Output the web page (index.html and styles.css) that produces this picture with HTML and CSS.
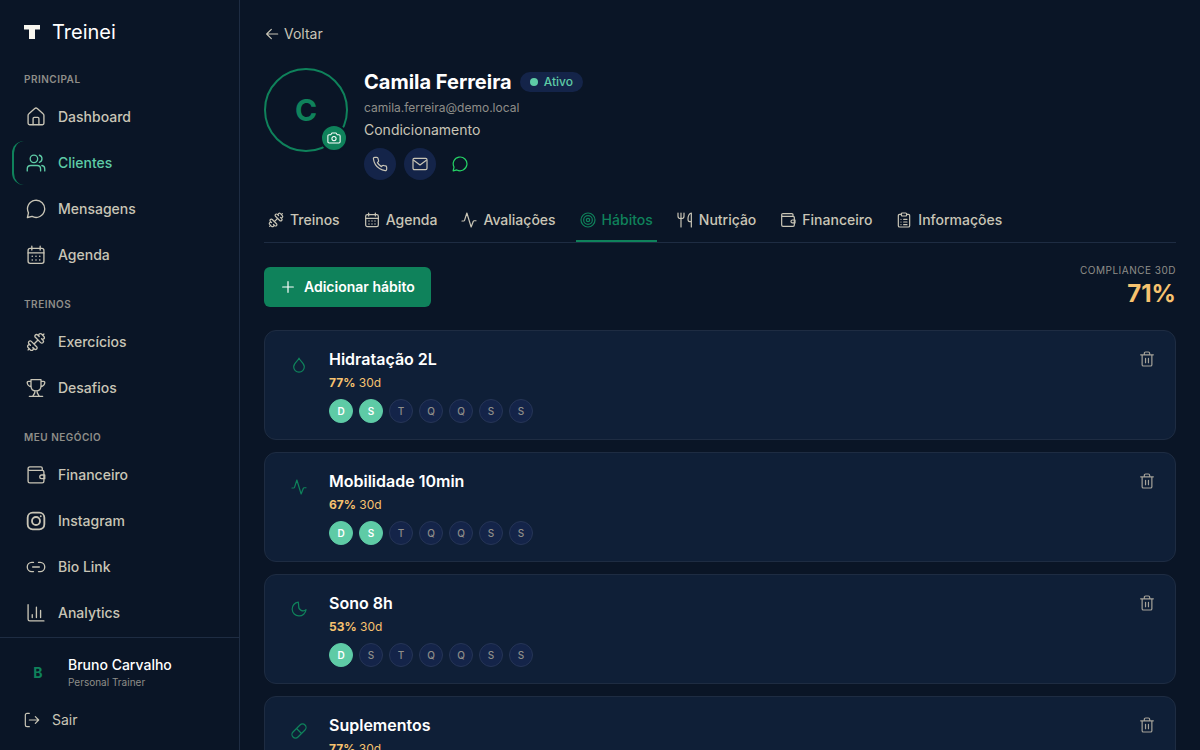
FILE: index.html
```
<!DOCTYPE html>
<html lang="pt-BR">
<head>
    <meta charset="UTF-8">
    <meta name="viewport" content="width=device-width, initial-scale=1.0">
    <title>Camila Ferreira - Treinei</title>
    <link rel="stylesheet" href="styles.css">
</head>
<body>
    <!-- Ícones -->
    <svg class="sprite" aria-hidden="true">
        <symbol id="i-home" viewBox="0 0 24 24"><path d="M2.5 10.2c0-.9.4-1.600 1-2.100l7-6.200c.9-.8 2.100-.8 3 0l7 6.200c.6.5 1 1.200 1 2.100v9.300c0 1.100-.7 1.800-1.800 1.800H4.300c-1.100 0-1.800-.7-1.800-1.800z"/><path d="M8.500 21v-7.200c0-.8.5-1.300 1.300-1.300h4.400c.8 0 1.300.5 1.300 1.300V21"/></symbol>
        <symbol id="i-users" viewBox="0 0 24 24"><circle cx="9.500" cy="7" r="4.500"/><path d="M1.500 21.500v-2.300c0-2.600 1.700-4.200 4.200-4.200h7.600c2.500 0 4.200 1.600 4.200 4.200v2.300M16 2.700a4.500 4.500 0 0 1 0 8.600M19 15c2.200.3 3.500 1.900 3.500 4.200v2.300"/></symbol>
        <symbol id="i-chat" viewBox="0 0 24 24"><path d="M1.700 22.200l1.300-5.600A10.300 10.300 0 1 1 7.300 20.900z"/></symbol>
        <symbol id="i-calendar" viewBox="0 0 24 24"><rect x="2.500" y="4" width="19" height="18" rx="2.500"/><path d="M2.500 9.500h19M7 1.500V6M17 1.500V6"/><path class="dots" d="M7.500 13.500h.01M12 13.500h.01M16.500 13.500h.01M7.500 18h.01M12 18h.01M16.500 18h.01"/></symbol>
        <symbol id="i-dumbbell" viewBox="0 0 24 24"><path d="M14.400 14.400 9.600 9.600M18.657 21.485a2 2 0 1 1-2.829-2.828l-1.767 1.768a2 2 0 1 1-2.829-2.829l6.364-6.364a2 2 0 1 1 2.829 2.829l-1.768 1.767a2 2 0 1 1 2.828 2.829zM21.500 21.500l-1.400-1.400M3.900 3.900 2.500 2.500M6.404 12.768a2 2 0 1 1-2.829-2.829l1.768-1.767a2 2 0 1 1-2.828-2.829l2.828-2.828a2 2 0 1 1 2.829 2.828l1.767-1.768a2 2 0 1 1 2.829 2.829z" transform="matrix(-1 0 0 1 24 0)"/></symbol>
        <symbol id="i-trophy" viewBox="0 0 24 24"><path d="M6 2h12v7.500c0 3.600-2.500 6-6 6s-6-2.400-6-6zM6 4H3.200C2 4 1.300 4.800 1.500 6c.3 2.400 2 4 4.700 4.500M18 4h2.800c1.200 0 1.900.8 1.700 2-.3 2.400-2 4-4.700 4.500M10.500 15.500v2.300L8 22M13.500 15.500v2.300L16 22M4 22h16"/></symbol>
        <symbol id="i-wallet" viewBox="0 0 24 24"><path d="M19.500 6.500V4c0-1-.7-1.700-1.700-1.700H4.500a2 2 0 0 0-2 2.200v15c0 1.200.8 2 2 2h15c1.200 0 2-.8 2-2V8.500c0-1.200-.8-2-2-2h-15a2 2 0 0 1-2-2.100"/><path d="M22.500 12h-3.800a2.200 2.200 0 0 0 0 4.400h3.800z"/></symbol>
        <symbol id="i-instagram" viewBox="0 0 24 24"><g stroke-width="2.200"><rect x="2" y="2" width="20" height="20" rx="6"/><circle cx="12" cy="12" r="4.800"/><path d="M17.700 6.300h.01"/></g></symbol>
        <symbol id="i-link" viewBox="0 0 24 24"><path d="M9 6.500H7a5.500 5.500 0 0 0 0 11h2M15 6.500h2a5.500 5.500 0 0 1 0 11h-2M8 12h8"/></symbol>
        <symbol id="i-chart" viewBox="0 0 24 24"><path d="M2.500 2v17.500c0 1.200.8 2 2 2H21.500M7.500 14v3.500M12.500 5v12.500M17.500 9v8.500"/></symbol>
        <symbol id="i-logout" viewBox="0 0 24 24"><path d="M8 2H4.500C3.100 2 2 3.100 2 4.500v15C2 20.900 3.100 22 4.500 22H8M8 12h14M17 7l5 5-5 5"/></symbol>
        <symbol id="i-back" viewBox="0 0 24 24"><path d="M20.500 12H4M11 5l-7 7 7 7"/></symbol>
        <symbol id="i-camera" viewBox="0 0 24 24"><path d="M8.500 3.500h7l2 3h3c1.200 0 2 .8 2 2v10c0 1.200-.8 2-2 2h-17c-1.200 0-2-.8-2-2v-10c0-1.200.8-2 2-2h3z"/><circle cx="12" cy="13" r="3.600"/></symbol>
        <symbol id="i-phone" viewBox="0 0 24 24"><path d="M22 16.920v3a2 2 0 0 1-2.180 2 19.790 19.790 0 0 1-8.630-3.070 19.500 19.500 0 0 1-6-6 19.790 19.790 0 0 1-3.070-8.670A2 2 0 0 1 4.110 2h3a2 2 0 0 1 2 1.720c.13.960.36 1.900.7 2.810a2 2 0 0 1-.45 2.110L8.090 9.910a16 16 0 0 0 6 6l1.270-1.270a2 2 0 0 1 2.110-.45c.91.340 1.850.570 2.810.7A2 2 0 0 1 22 16.920z"/></symbol>
        <symbol id="i-mail" viewBox="0 0 24 24"><rect x="1.500" y="3.500" width="21" height="17" rx="2"/><path d="M2.500 6.500 12 13.500l9.500-7"/></symbol>
        <symbol id="i-activity" viewBox="0 0 24 24"><path d="M1.500 13.500h2.400c.7 0 1.200-.4 1.400-1L8.800 1.500l6.400 21 3.300-8.500c.2-.6.7-.9 1.300-.9h2.700"/></symbol>
        <symbol id="i-target" viewBox="0 0 24 24"><circle cx="12" cy="12" r="10.500"/><circle cx="12" cy="12" r="6.500"/><circle cx="12" cy="12" r="2.500"/></symbol>
        <symbol id="i-food" viewBox="0 0 24 24"><path d="M6 1.500v21M1.500 1.500v4.800C1.500 8.700 3.300 10 6 10s4.500-1.300 4.500-3.700V1.500M21.500 22.500v-21c-3 .8-5 4.300-5 9.500 0 2.200.9 3.500 2.500 3.500h2.500"/></symbol>
        <symbol id="i-clipboard" viewBox="0 0 24 24"><path d="M8 3.500H5.500c-1.200 0-2 .8-2 2V20.500c0 1.200.8 2 2 2h13c1.200 0 2-.8 2-2V5.500c0-1.200-.8-2-2-2H16"/><rect x="8" y="1.500" width="8" height="4.500" rx="1.500"/><path d="M7.500 11h.01M7.500 15h.01M7.500 19h.01M11.500 11h5M11.500 15h5M11.500 19h5"/></symbol>
        <symbol id="i-plus" viewBox="0 0 24 24"><path d="M12 4v16M4 12h16"/></symbol>
        <symbol id="i-drop" viewBox="0 0 24 24"><path d="M12 1.500c0 3.300-8 7.400-8 13.200a8 8 0 0 0 16 0C20 8.900 12 4.800 12 1.500z"/></symbol>
        <symbol id="i-moon" viewBox="0 0 24 24"><path d="M11 1.700A10.400 10.400 0 1 0 22.500 13 6.600 6.600 0 0 1 11.500 7.500c0-2.200-.6-4.200-.5-5.800z"/></symbol>
        <symbol id="i-pill" viewBox="0 0 24 24"><path d="m10.500 21 10.500-10.500a5.300 5.300 0 0 0-7.500-7.500L3 13.500a5.300 5.300 0 0 0 7.500 7.500zM8.300 8.300l7.500 7.500"/></symbol>
        <symbol id="i-trash" viewBox="0 0 24 24"><path d="M2.500 5.800h19M4.700 5.800v14.700c0 1.200.8 2 2 2h10.600c1.200 0 2-.8 2-2V5.800M8 5.500V3.500c0-1.200.8-2 2-2h4c1.200 0 2 .8 2 2v2M9.800 11v6.500M14.200 11v6.500"/></symbol>
    </svg>

    <div class="app">
        <aside class="sidebar">
            <a class="brand" href="#">
                <svg class="brand-mark" viewBox="0 0 16 14" aria-hidden="true"><path d="M0 0h16v4.500h-5V14H5V4.500H0z"/></svg>
                <span>Treinei</span>
            </a>

            <nav class="nav">
                <h2 class="nav-label">Principal</h2>
                <a class="nav-item" href="#"><svg class="icon"><use href="#i-home"/></svg>Dashboard</a>
                <a class="nav-item active" href="#"><svg class="icon"><use href="#i-users"/></svg>Clientes</a>
                <a class="nav-item" href="#"><svg class="icon"><use href="#i-chat"/></svg>Mensagens</a>
                <a class="nav-item" href="#"><svg class="icon"><use href="#i-calendar"/></svg>Agenda</a>

                <h2 class="nav-label">Treinos</h2>
                <a class="nav-item" href="#"><svg class="icon"><use href="#i-dumbbell"/></svg>Exercícios</a>
                <a class="nav-item" href="#"><svg class="icon"><use href="#i-trophy"/></svg>Desafios</a>

                <h2 class="nav-label">Meu negócio</h2>
                <a class="nav-item" href="#"><svg class="icon"><use href="#i-wallet"/></svg>Financeiro</a>
                <a class="nav-item" href="#"><svg class="icon"><use href="#i-instagram"/></svg>Instagram</a>
                <a class="nav-item" href="#"><svg class="icon"><use href="#i-link"/></svg>Bio Link</a>
                <a class="nav-item" href="#"><svg class="icon"><use href="#i-chart"/></svg>Analytics</a>
            </nav>

            <div class="sidebar-footer">
                <div class="user">
                    <span class="user-avatar">B</span>
                    <div>
                        <div class="user-name">Bruno Carvalho</div>
                        <div class="user-role">Personal Trainer</div>
                    </div>
                </div>
                <button class="logout" type="button"><svg class="icon"><use href="#i-logout"/></svg>Sair</button>
            </div>
        </aside>

        <main class="content">
            <a class="back" href="#"><svg class="icon"><use href="#i-back"/></svg>Voltar</a>

            <header class="profile">
                <div class="avatar">
                    C
                    <button class="avatar-edit" type="button" aria-label="Alterar foto"><svg class="icon"><use href="#i-camera"/></svg></button>
                </div>
                <div>
                    <div class="profile-title">
                        <h1>Camila Ferreira</h1>
                        <span class="status">Ativo</span>
                    </div>
                    <p class="email">camila.ferreira@demo.local</p>
                    <p class="goal">Condicionamento</p>
                    <div class="contacts">
                        <a class="contact" href="#" aria-label="Telefone"><svg class="icon"><use href="#i-phone"/></svg></a>
                        <a class="contact" href="#" aria-label="E-mail"><svg class="icon"><use href="#i-mail"/></svg></a>
                        <a class="contact whatsapp" href="#" aria-label="WhatsApp"><svg class="icon"><use href="#i-chat"/></svg></a>
                    </div>
                </div>
            </header>

            <nav class="tabs">
                <a class="tab" href="#"><svg class="icon"><use href="#i-dumbbell"/></svg>Treinos</a>
                <a class="tab" href="#"><svg class="icon"><use href="#i-calendar"/></svg>Agenda</a>
                <a class="tab" href="#"><svg class="icon"><use href="#i-activity"/></svg>Avaliações</a>
                <a class="tab active" href="#"><svg class="icon"><use href="#i-target"/></svg>Hábitos</a>
                <a class="tab" href="#"><svg class="icon"><use href="#i-food"/></svg>Nutrição</a>
                <a class="tab" href="#"><svg class="icon"><use href="#i-wallet"/></svg>Financeiro</a>
                <a class="tab" href="#"><svg class="icon"><use href="#i-clipboard"/></svg>Informações</a>
            </nav>

            <div class="toolbar">
                <button class="btn-add" type="button"><svg class="icon"><use href="#i-plus"/></svg>Adicionar hábito</button>
                <div class="compliance">
                    <div class="compliance-label">Compliance 30d</div>
                    <div class="compliance-value">71%</div>
                </div>
            </div>

            <section class="habits">
                <article class="habit">
                    <div class="habit-icon"><svg class="icon"><use href="#i-drop"/></svg></div>
                    <div class="habit-body">
                        <h3>Hidratação 2L</h3>
                        <p class="rate"><strong>77%</strong> 30d</p>
                        <div class="days">
                            <span class="day done">D</span><span class="day done">S</span><span class="day">T</span><span class="day">Q</span><span class="day">Q</span><span class="day">S</span><span class="day">S</span>
                        </div>
                    </div>
                    <button class="remove" type="button" aria-label="Remover Hidratação 2L"><svg class="icon"><use href="#i-trash"/></svg></button>
                </article>
                <article class="habit">
                    <div class="habit-icon"><svg class="icon"><use href="#i-activity"/></svg></div>
                    <div class="habit-body">
                        <h3>Mobilidade 10min</h3>
                        <p class="rate"><strong>67%</strong> 30d</p>
                        <div class="days">
                            <span class="day done">D</span><span class="day done">S</span><span class="day">T</span><span class="day">Q</span><span class="day">Q</span><span class="day">S</span><span class="day">S</span>
                        </div>
                    </div>
                    <button class="remove" type="button" aria-label="Remover Mobilidade 10min"><svg class="icon"><use href="#i-trash"/></svg></button>
                </article>
                <article class="habit">
                    <div class="habit-icon"><svg class="icon"><use href="#i-moon"/></svg></div>
                    <div class="habit-body">
                        <h3>Sono 8h</h3>
                        <p class="rate"><strong>53%</strong> 30d</p>
                        <div class="days">
                            <span class="day done">D</span><span class="day">S</span><span class="day">T</span><span class="day">Q</span><span class="day">Q</span><span class="day">S</span><span class="day">S</span>
                        </div>
                    </div>
                    <button class="remove" type="button" aria-label="Remover Sono 8h"><svg class="icon"><use href="#i-trash"/></svg></button>
                </article>
                <article class="habit">
                    <div class="habit-icon"><svg class="icon"><use href="#i-pill"/></svg></div>
                    <div class="habit-body">
                        <h3>Suplementos</h3>
                        <p class="rate"><strong>77%</strong> 30d</p>
                    </div>
                    <button class="remove" type="button" aria-label="Remover Suplementos"><svg class="icon"><use href="#i-trash"/></svg></button>
                </article>
            </section>
        </main>
    </div>
</body>
</html>
```
FILE: styles.css
```
:root {
    --bg: #0a1526;
    --card: #0f1f37;
    --pill: #142449;
    --line: #1e2c42;
    --text: #c9c5b6;
    --muted: #8f8e89;
    --green: #0f825b;
    --mint: #5ecba6;
    --amber: #f7c26f;
}
* {
    box-sizing: border-box;
}
body {
    margin: 0;
    background-color: var(--bg);
    color: var(--text);
    font-family: Inter, sans-serif;
    font-size: 14px;
    line-height: 20px;
}
h1, h2, h3, p {
    margin: 0;
}
a {
    color: inherit;
    text-decoration: none;
}
button {
    font: inherit;
    color: inherit;
    background: none;
    border: 0;
    padding: 0;
    cursor: pointer;
}
.sprite {
    display: none;
}
.icon {
    width: 16px;
    height: 16px;
    flex-shrink: 0;
    fill: none;
    stroke: currentColor;
    stroke-width: 1.8;
    stroke-linecap: round;
    stroke-linejoin: round;
}
.dots {
    stroke-width: 2;
}
.app {
    display: flex;
    height: 100vh;
    overflow: hidden;
}

/* Menu lateral */
.sidebar {
    display: flex;
    flex-direction: column;
    width: 240px;
    flex-shrink: 0;
    border-right: 1px solid var(--line);
}
.brand {
    display: flex;
    align-items: center;
    gap: 12px;
    padding: 18px 24px 14px;
    color: #fff;
    font-size: 20px;
    font-weight: 400;
    line-height: 28px;
}
.brand-mark {
    width: 16px;
    height: 14px;
    fill: #f8f6ef;
}
.nav {
    flex: 1;
    min-height: 0;
    overflow: hidden;
    display: flex;
    flex-direction: column;
    gap: 2px;
    padding: 0 12px;
}
.nav-label {
    margin: 17px 12px 6px;
    color: var(--muted);
    font-size: 10px;
    font-weight: 600;
    line-height: 16px;
    letter-spacing: 0.05em;
    text-transform: uppercase;
}
.nav-label:first-child {
    margin-top: 11px;
}
.nav-item {
    display: flex;
    align-items: center;
    gap: 12px;
    height: 44px;
    flex-shrink: 0;
    padding: 0 12px;
    border-left: 2px solid transparent;
    border-radius: 12px;
    font-weight: 500;
}
.nav-item .icon {
    width: 20px;
    height: 20px;
    stroke-width: 1.6;
}
.nav-item.active {
    border-left-color: var(--green);
    color: var(--mint);
}
.sidebar-footer {
    border-top: 1px solid var(--line);
    padding: 17px 24px 20px;
}
.user {
    display: flex;
    align-items: center;
    gap: 16px;
}
.user-avatar {
    width: 28px;
    color: var(--green);
    font-weight: 700;
    text-align: center;
}
.user-name {
    color: #fff;
    font-weight: 500;
}
.user-role {
    color: var(--muted);
    font-size: 10px;
    line-height: 15px;
}
.logout {
    display: flex;
    align-items: center;
    gap: 12px;
    margin-top: 20px;
}

/* Conteúdo */
.content {
    flex: 1;
    min-width: 0;
    padding: 24px;
    overflow-y: auto;
    scrollbar-width: none;
}
.back {
    display: flex;
    align-items: center;
    gap: 4px;
}
.profile {
    display: flex;
    gap: 16px;
    margin-top: 24px;
}
.avatar {
    position: relative;
    display: flex;
    align-items: center;
    justify-content: center;
    width: 84px;
    height: 84px;
    border: 2px solid var(--green);
    border-radius: 50%;
    color: var(--green);
    font-size: 30px;
    font-weight: 700;
}
.avatar-edit {
    position: absolute;
    right: -2px;
    bottom: -2px;
    display: flex;
    align-items: center;
    justify-content: center;
    width: 28px;
    height: 28px;
    border: 2px solid var(--bg);
    border-radius: 50%;
    background-color: var(--green);
    color: #fff;
}
.avatar-edit .icon {
    width: 14px;
    height: 14px;
}
.profile-title {
    display: flex;
    align-items: center;
    gap: 8px;
}
.profile-title h1 {
    color: #fff;
    font-size: 20px;
    font-weight: 700;
    line-height: 28px;
}
.status {
    display: flex;
    align-items: center;
    gap: 6px;
    padding: 0 10px;
    border-radius: 10px;
    background-color: var(--pill);
    color: var(--mint);
    font-size: 12px;
    font-weight: 500;
    line-height: 20px;
}
.status::before {
    content: "";
    width: 8px;
    height: 8px;
    border-radius: 50%;
    background-color: var(--mint);
}
.email {
    margin-top: 2px;
    color: var(--muted);
    font-size: 12px;
}
.goal {
    margin-top: 2px;
}
.contacts {
    display: flex;
    gap: 8px;
    margin-top: 8px;
}
.contact {
    display: flex;
    align-items: center;
    justify-content: center;
    width: 32px;
    height: 32px;
    border-radius: 50%;
    background-color: var(--pill);
}
.contact.whatsapp {
    background-color: transparent;
    color: #25d366;
}
.tabs {
    display: flex;
    gap: 16px;
    margin-top: 18px;
    border-bottom: 1px solid var(--line);
}
.tab {
    display: flex;
    align-items: center;
    gap: 6px;
    padding: 12px 4px 10px;
    border-bottom: 2px solid transparent;
    font-weight: 500;
}
.tab.active {
    border-bottom-color: var(--green);
    color: var(--green);
}
.toolbar {
    display: flex;
    align-items: center;
    justify-content: space-between;
    margin-top: 20px;
}
.btn-add {
    display: flex;
    align-items: center;
    gap: 8px;
    height: 40px;
    padding: 0 16px;
    border-radius: 6px;
    background-color: var(--green);
    color: #fff;
    font-weight: 600;
}
.compliance {
    text-align: right;
}
.compliance-label {
    color: var(--muted);
    font-size: 10px;
    line-height: 15px;
    letter-spacing: 0.05em;
    text-transform: uppercase;
}
.compliance-value {
    color: var(--amber);
    font-size: 24px;
    font-weight: 700;
    line-height: 32px;
}

/* Hábitos */
.habits {
    display: flex;
    flex-direction: column;
    gap: 12px;
    margin-top: 20px;
}
.habit {
    display: flex;
    align-items: flex-start;
    gap: 12px;
    min-height: 110px;
    padding: 16px;
    border: 1px solid var(--line);
    border-radius: 12px;
    background-color: var(--card);
}
.habit-icon {
    display: flex;
    align-items: center;
    justify-content: center;
    width: 36px;
    height: 36px;
    color: var(--green);
}
.habit-body {
    flex: 1;
}
.habit h3 {
    color: #fff;
    font-size: 16px;
    font-weight: 600;
    line-height: 24px;
}
.rate {
    margin-top: 2px;
    color: var(--amber);
    font-size: 12px;
}
.rate strong {
    font-weight: 700;
}
.days {
    display: flex;
    gap: 6px;
    margin-top: 6px;
}
.day {
    display: flex;
    align-items: center;
    justify-content: center;
    width: 24px;
    height: 24px;
    border: 1px solid #263556;
    border-radius: 50%;
    background-color: var(--pill);
    color: var(--muted);
    font-size: 10px;
    font-weight: 500;
}
.day.done {
    border-color: var(--mint);
    background-color: var(--mint);
    color: #fff;
    font-weight: 600;
}
.remove {
    display: flex;
    align-items: center;
    justify-content: center;
    width: 24px;
    height: 24px;
    color: #a5a299;
}
```
